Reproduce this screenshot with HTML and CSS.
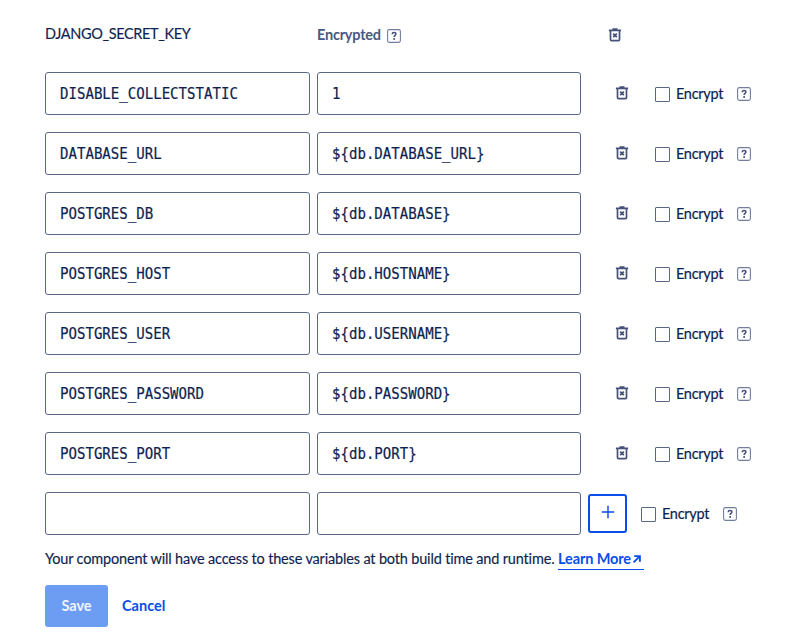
FILE: index.html
```html
<!DOCTYPE html>
<html lang="en">
<head>
<meta charset="utf-8">
<title>Environment Variables</title>
<link rel="stylesheet" href="styles.css">
</head>
<body>
<svg width="0" height="0" class="defs">
  <symbol id="trash" viewBox="0 0 14 14"><path d="M.9 2.4h12.2M4.5 1.2h5" stroke="currentColor" stroke-width="1.7" fill="none"/><path d="M2.5 2.8v8.7q0 1.1 1.1 1.1h6.8q1.1 0 1.1-1.1V2.8" stroke="currentColor" stroke-width="1.7" fill="none"/><path d="M5.2 5.6l3.6 3.6M8.8 5.6L5.2 9.2" stroke="currentColor" stroke-width="1.8" fill="none"/></symbol>
  <symbol id="help" viewBox="0 0 14 14"><rect x=".6" y=".6" width="12.8" height="12.8" rx="1.8" fill="none" stroke="#717da0" stroke-width="1.1"/><path d="M5.1 5.3c.1-1.1.8-1.7 1.9-1.7s1.9.6 1.9 1.5c0 1.3-1.8 1.3-1.8 2.8" fill="none" stroke="#45517a" stroke-width="1.5"/><circle cx="7.1" cy="10" r="1" fill="#45517a"/></symbol>
</svg>
<form class="env">
  <div class="row head">
    <div class="key">DJANGO_SECRET_KEY</div>
    <div class="status"><span class="encrypted">Encrypted</span><svg class="help"><use href="#help"/></svg></div>
    <svg class="trash"><use href="#trash"/></svg>
  </div>
  <div class="row"><div class="field"><span>DISABLE_COLLECTSTATIC</span></div><div class="field"><span>1</span></div><svg class="trash"><use href="#trash"/></svg><label class="check"><i class="box"></i><span>Encrypt</span></label><svg class="help"><use href="#help"/></svg></div>
  <div class="row"><div class="field"><span>DATABASE_URL</span></div><div class="field"><span>${db.DATABASE_URL}</span></div><svg class="trash"><use href="#trash"/></svg><label class="check"><i class="box"></i><span>Encrypt</span></label><svg class="help"><use href="#help"/></svg></div>
  <div class="row"><div class="field"><span>POSTGRES_DB</span></div><div class="field"><span>${db.DATABASE}</span></div><svg class="trash"><use href="#trash"/></svg><label class="check"><i class="box"></i><span>Encrypt</span></label><svg class="help"><use href="#help"/></svg></div>
  <div class="row"><div class="field"><span>POSTGRES_HOST</span></div><div class="field"><span>${db.HOSTNAME}</span></div><svg class="trash"><use href="#trash"/></svg><label class="check"><i class="box"></i><span>Encrypt</span></label><svg class="help"><use href="#help"/></svg></div>
  <div class="row"><div class="field"><span>POSTGRES_USER</span></div><div class="field"><span>${db.USERNAME}</span></div><svg class="trash"><use href="#trash"/></svg><label class="check"><i class="box"></i><span>Encrypt</span></label><svg class="help"><use href="#help"/></svg></div>
  <div class="row"><div class="field"><span>POSTGRES_PASSWORD</span></div><div class="field"><span>${db.PASSWORD}</span></div><svg class="trash"><use href="#trash"/></svg><label class="check"><i class="box"></i><span>Encrypt</span></label><svg class="help"><use href="#help"/></svg></div>
  <div class="row"><div class="field"><span>POSTGRES_PORT</span></div><div class="field"><span>${db.PORT}</span></div><svg class="trash"><use href="#trash"/></svg><label class="check"><i class="box"></i><span>Encrypt</span></label><svg class="help"><use href="#help"/></svg></div>
  <div class="row new"><div class="field"></div><div class="field"></div><button type="button" class="add" aria-label="Add"><svg viewBox="0 0 14 14"><path d="M7 .8v12.4M.8 7h12.4" stroke="currentColor" stroke-width="1.4"/></svg></button><label class="check"><i class="box"></i><span>Encrypt</span></label><svg class="help"><use href="#help"/></svg></div>
  <p class="note"><span class="copy">Your component will have access to these variables at both build time and runtime.</span><a class="more"><span>Learn More</span><svg viewBox="0 0 10 10"><path d="M2.2 2.1h5.7v5.7M7.8 2.2L1.6 8.4" fill="none" stroke="currentColor" stroke-width="1.9"/></svg></a></p>
  <div class="actions"><button type="button" class="save">Save</button><a class="cancel">Cancel</a></div>
</form>
</body>
</html>
```
FILE: styles.css
```css
* { box-sizing: border-box; }
body { margin: 0; background: #fff; color: #0f1f4f; font: 14.5px/20px Lato, "Liberation Sans", sans-serif; }
.defs { display: block; height: 0; }
.env { padding-left: 45px; width: 800px; }
.row { display: flex; align-items: center; height: 43px; margin-bottom: 17px; }
.head { height: 46px; padding-top: 21px; margin-bottom: 26px; }
.key { width: 272px; font-size: 14.5px; letter-spacing: -.36px; white-space: nowrap; -webkit-text-stroke: .15px; }
.status { display: flex; align-items: center; width: 264px; color: #4b5880; font-weight: 700; padding-top: 3px; }
.encrypted { width: 70px; font-size: 14.5px; letter-spacing: -.22px; }
.help { width: 14px; height: 14px; margin-top: 2px; flex: none; }
.trash { width: 14px; height: 14px; margin: -2px 26px 0 34px; color: #45517a; flex: none; }
.head .trash { margin: 2px 0 0 27px; }
.field { width: 265px; height: 43px; margin-right: 7px; padding: 0 14px; border: 1px solid #596788; border-radius: 3px; display: flex; align-items: center; flex: none; }
.field + .field { width: 264px; margin-right: 0; }
.field span { font: 15px/20px "DejaVu Sans Mono", monospace; transform: scaleX(.938); transform-origin: 0 50%; -webkit-text-stroke: .2px; }
.check { display: flex; align-items: center; width: 82px; flex: none; }
.check span { letter-spacing: -.3px; -webkit-text-stroke: .2px; }
.row > .help { margin-top: 1px; }
.box { width: 15px; height: 15px; margin: 1px 6px 0 0; border: 1px solid #596788; border-radius: 1px; }
.new { margin-bottom: 14px; }
.add { width: 39px; height: 39px; margin: -1px 14px 0 7px; padding: 0; border: 2px solid #084ee8; border-radius: 3px; background: #fff; color: #084ee8; display: grid; place-items: center; }
.add svg { width: 14px; height: 14px; margin-top: -2px; }
.note { display: flex; margin: 0; height: 21px; }
.copy { width: 513px; white-space: nowrap; letter-spacing: -.17px; -webkit-text-stroke: .15px; }
.more { display: flex; align-items: center; width: 86px; height: 21px; border-bottom: 1px solid #084ee8; color: #084ee8; font-weight: 700; white-space: nowrap; letter-spacing: -.12px; }
.more span { width: 74px; }
.more svg { width: 10px; height: 10px; }
.actions { display: flex; align-items: center; gap: 14px; margin-top: 15px; }
.save { width: 63px; height: 42px; padding: 0 0 1px; border: 0; border-radius: 3px; background: #6c9df2; color: #eef4ff; font: 700 14.5px Lato, sans-serif; }
.cancel { color: #084ee8; font-weight: 700; margin-top: -1px; }
```
